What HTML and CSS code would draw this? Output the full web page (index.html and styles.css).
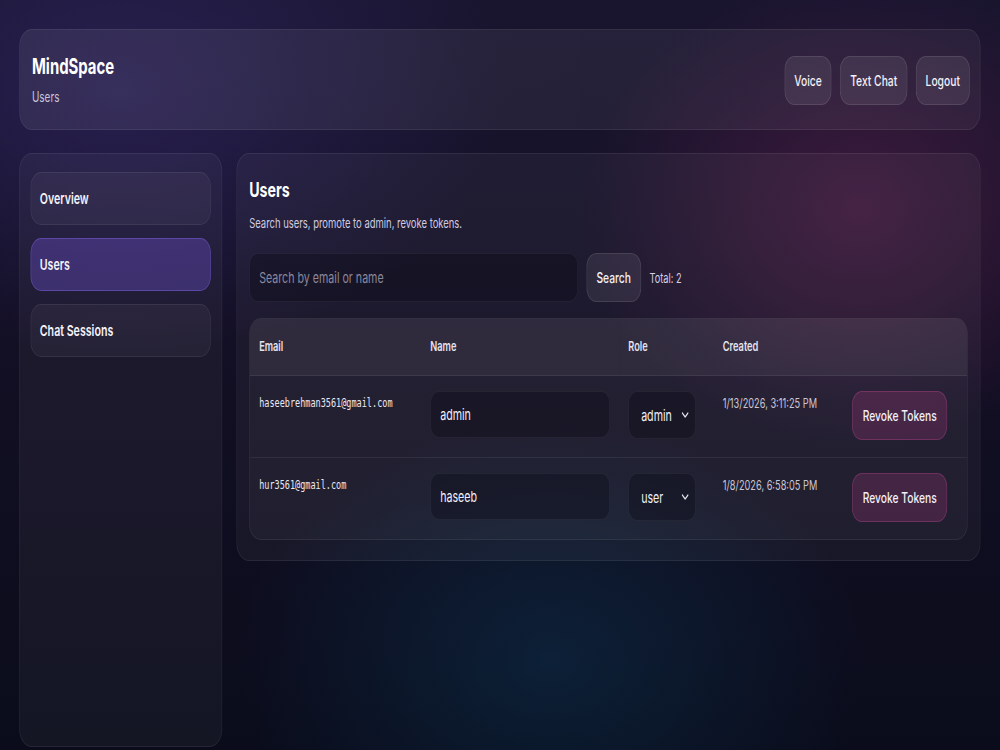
FILE: index.html
```html
<!DOCTYPE html>
<html lang="en">

<head>
    <meta charset="UTF-8">
    <meta name="viewport" content="width=device-width, initial-scale=1.0">
    <title>MindSpace - Users</title>

    <link rel="stylesheet" href="styles.css">
</head>

<body>
    <div class="frame">
    <div class="page">
        <header class="topbar">
            <div class="brand">
                <h1>MindSpace</h1>
                <div class="crumb">Users</div>
            </div>
            <nav class="top-actions">
                <button class="btn">Voice</button>
                <button class="btn">Text Chat</button>
                <button class="btn">Logout</button>
            </nav>
        </header>

        <div class="layout">
            <aside class="sidebar">
                <a class="side-link">Overview</a>
                <a class="side-link active">Users</a>
                <a class="side-link">Chat Sessions</a>
            </aside>

            <main class="panel">
                <h2>Users</h2>
                <p class="muted">Search users, promote to admin, revoke tokens.</p>

                <div class="search-row">
                    <input class="field search-input" type="text" placeholder="Search by email or name">
                    <button class="btn">Search</button>
                    <span class="total">Total: 2</span>
                </div>

                <div class="table-wrap">
                    <table class="users-table">
                        <colgroup>
                            <col class="col-email">
                            <col class="col-name">
                            <col class="col-role">
                            <col class="col-created">
                            <col>
                        </colgroup>
                        <thead>
                            <tr>
                                <th>Email</th>
                                <th>Name</th>
                                <th>Role</th>
                                <th>Created</th>
                                <th></th>
                            </tr>
                        </thead>
                        <tbody>
                            <tr>
                                <td class="mono">haseebrehman3561@gmail.com</td>
                                <td><input class="field" type="text" value="admin"></td>
                                <td>
                                    <div class="select-box">
                                        <select class="field role-select">
                                            <option selected>admin</option>
                                            <option>user</option>
                                        </select>
                                        <svg class="chevron" width="10" height="6" viewBox="0 0 10 6"><path d="M1 1l4 4 4-4" fill="none" stroke="#e8e6f0" stroke-width="1.6" stroke-linecap="round" stroke-linejoin="round"/></svg>
                                    </div>
                                </td>
                                <td class="date">1/13/2026, 3:11:25 PM</td>
                                <td><button class="btn danger">Revoke Tokens</button></td>
                            </tr>
                            <tr>
                                <td class="mono">hur3561@gmail.com</td>
                                <td><input class="field" type="text" value="haseeb"></td>
                                <td>
                                    <div class="select-box">
                                        <select class="field role-select">
                                            <option>admin</option>
                                            <option selected>user</option>
                                        </select>
                                        <svg class="chevron" width="10" height="6" viewBox="0 0 10 6"><path d="M1 1l4 4 4-4" fill="none" stroke="#e8e6f0" stroke-width="1.6" stroke-linecap="round" stroke-linejoin="round"/></svg>
                                    </div>
                                </td>
                                <td class="date">1/8/2026, 6:58:05 PM</td>
                                <td><button class="btn danger">Revoke Tokens</button></td>
                            </tr>
                        </tbody>
                    </table>
                </div>
            </main>
        </div>
    </div>
    </div>
</body>

</html>
```

FILE: styles.css
```css
html,
body {
    margin: 0;
    height: 100%;
    overflow: hidden;
}

body {
    font-family: Inter, "Noto Sans", sans-serif;
    color: #f2f0f8;
    background:
        radial-gradient(ellipse 40% 45% at 86% 28%, rgba(110, 36, 86, 0.45), transparent 70%),
        radial-gradient(ellipse 45% 45% at 55% 88%, rgba(12, 48, 76, 0.55), transparent 70%),
        radial-gradient(ellipse 55% 50% at 12% 12%, rgba(62, 48, 130, 0.42), transparent 70%),
        linear-gradient(180deg, #19152f 0%, #130f24 45%, #0a0c1b 100%);
}

.frame {
    width: 100%;
    height: 100%;
    overflow: hidden;
}

.page {
    width: 1408px;
    box-sizing: border-box;
    padding: 29px 27px 0;
    transform: scaleX(0.71);
    transform-origin: 0 0;
}

.topbar {
    display: flex;
    justify-content: space-between;
    align-items: center;
    padding: 23px 14px 22px 17px;
    border: 1px solid rgba(255, 255, 255, 0.07);
    border-radius: 18px;
    background: linear-gradient(90deg, rgba(255, 255, 255, 0.075), rgba(255, 255, 255, 0.05));
}

.brand h1 {
    margin: 0;
    font-size: 21px;
    line-height: 28px;
    font-weight: 700;
    color: #fff;
}

.crumb {
    margin-top: 6px;
    font-size: 14px;
    line-height: 20px;
    color: #c8c4d8;
}

.top-actions {
    display: flex;
    gap: 12px;
}

.btn {
    font-family: inherit;
    font-size: 14.5px;
    font-weight: 500;
    line-height: 19px;
    color: #f2f0f8;
    padding: 14px 13px;
    border: 1px solid rgba(255, 255, 255, 0.1);
    border-radius: 14px;
    background: rgba(255, 255, 255, 0.08);
    white-space: nowrap;
}

.layout {
    display: grid;
    grid-template-columns: 286px 1fr;
    gap: 20px;
    align-items: start;
    margin-top: 23px;
}

.sidebar {
    display: flex;
    flex-direction: column;
    gap: 13px;
    min-height: calc(100vh - 156px);
    box-sizing: border-box;
    padding: 18px 15px;
    border: 1px solid rgba(255, 255, 255, 0.07);
    border-radius: 18px;
    background: rgba(255, 255, 255, 0.045);
}

.side-link {
    font-size: 15px;
    font-weight: 600;
    line-height: 21px;
    padding: 15px 12px;
    border: 1px solid rgba(255, 255, 255, 0.07);
    border-radius: 15px;
    background: rgba(255, 255, 255, 0.045);
    color: #f4f2fa;
}

.side-link.active {
    background: rgba(108, 78, 200, 0.38);
    border-color: rgba(130, 100, 230, 0.45);
}

.panel {
    padding: 22px 17px 20px;
    border: 1px solid rgba(255, 255, 255, 0.07);
    border-radius: 18px;
    background: rgba(255, 255, 255, 0.045);
}

.panel h2 {
    margin: 0;
    font-size: 20px;
    line-height: 28px;
    font-weight: 700;
    color: #fff;
}

.muted {
    margin: 9px 0 20px;
    font-size: 13.3px;
    line-height: 20px;
    color: #d0cce0;
}

.search-row {
    display: flex;
    align-items: stretch;
    gap: 12px;
}

.field {
    box-sizing: border-box;
    font-family: inherit;
    font-size: 15px;
    line-height: 19px;
    color: #f2f0f8;
    padding: 13px 13px;
    border: 1px solid rgba(255, 255, 255, 0.06);
    border-radius: 12px;
    background: rgba(8, 8, 20, 0.35);
    outline: none;
}

.field::placeholder {
    color: #8a879b;
}

.search-input {
    width: 463px;
}

.total {
    align-self: center;
    font-size: 13px;
    color: #d4d0e2;
}

.table-wrap {
    margin-top: 16px;
    border: 1px solid rgba(255, 255, 255, 0.07);
    border-radius: 16px;
    overflow: hidden;
    background: rgba(255, 255, 255, 0.03);
}

.users-table {
    width: 100%;
    border-collapse: collapse;
    table-layout: fixed;
}

.col-email {
    width: 241px;
}

.col-name {
    width: 279px;
}

.col-role {
    width: 133px;
}

.col-created {
    width: 182px;
}

.users-table th {
    text-align: left;
    font-size: 13px;
    font-weight: 600;
    line-height: 18px;
    color: #e6e3ef;
    padding: 18px 13px 20px;
    background: rgba(255, 255, 255, 0.05);
    border-bottom: 1px solid rgba(255, 255, 255, 0.07);
}

.users-table td {
    vertical-align: top;
    padding: 15px 13px 17px;
    border-bottom: 1px solid rgba(255, 255, 255, 0.07);
}

.users-table tbody tr:last-child td {
    border-bottom: 0;
}

.users-table td .field {
    width: 100%;
}

.mono {
    font-family: "DejaVu Sans Mono", "Liberation Mono", monospace;
    font-size: 12px;
    line-height: 24px;
    color: #ebe9f3;
}

.date {
    font-size: 13px;
    line-height: 24px;
    color: #c9c5d6;
}

.select-box {
    position: relative;
    width: 95px;
}

.users-table td .role-select {
    appearance: none;
    -webkit-appearance: none;
    padding: 14px 26px 13px 17px;
    cursor: pointer;
}

.chevron {
    position: absolute;
    right: 10px;
    top: 21px;
    pointer-events: none;
}

.btn.danger {
    padding: 14px 14px;
    background: rgba(190, 60, 140, 0.22);
    border-color: rgba(210, 80, 160, 0.3);
}
```
